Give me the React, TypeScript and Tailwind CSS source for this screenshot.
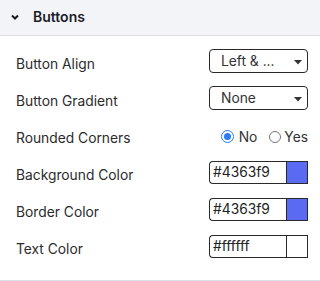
import React from "react";

function Label({ children }: { children: React.ReactNode }) {
  return <div className="mt-[5px] text-[13.8px] text-[#2b2b2b] leading-4">{children}</div>;
}

function Select({ value }: { value: string }) {
  return (
    <div className="relative flex h-[24px] w-[99px] items-center rounded-[4px] border border-[#2a2a2a] bg-white pl-[11px] text-[13.8px] leading-4 text-[#333]">
      {value}
      <svg className="absolute right-[5px] top-[10px]" width="8" height="5" viewBox="0 0 8 5">
        <polygon points="0,0 8,0 4,4.5" fill="#333" />
      </svg>
    </div>
  );
}

function ColorInput({ value, color }: { value: string; color: string }) {
  return (
    <div className="flex h-[23px] w-[99px]">
      <div className="flex flex-1 items-center rounded-l-[4px] border border-r-0 border-[#2a2a2a] pl-[3px] text-[13.8px] leading-4 text-[#222]">
        {value}
      </div>
      <div className="h-full w-[22px] border border-[#2a2a2a]" style={{ backgroundColor: color }} />
    </div>
  );
}

function Row({ label, children }: { label: string; children: React.ReactNode }) {
  return (
    <div className="flex h-[24px] items-center justify-between">
      <Label>{label}</Label>
      {children}
    </div>
  );
}

export default function App() {
  return (
    <div className="w-[320px] bg-white font-['Inter',sans-serif]">
      <div className="flex h-[36px] items-center border-b border-[#dcdfe7] bg-[#f3f4f8] pb-[3px] pl-[11px]">
        <svg width="8" height="6" viewBox="0 0 8 6" className="mt-[2px]">
          <polyline points="1,1.5 4,4.5 7,1.5" fill="none" stroke="#1a1a1a" strokeWidth="2" />
        </svg>
        <span className="ml-[14px] text-[14px] font-semibold text-[#1c1c28]">Buttons</span>
      </div>
      <div className="flex flex-col gap-[13px] border-b border-[#dcdfe7] pb-[22px] pl-[16px] pr-[12px] pt-[13px]">
        <Row label="Button Align">
          <Select value="Left & ..." />
        </Row>
        <Row label="Button Gradient">
          <Select value="None" />
        </Row>
        <Row label="Rounded Corners">
          <div className="mt-[3px] flex items-center text-[13.8px] leading-4 text-[#333]">
            <span className="flex h-[13px] w-[13px] items-center justify-center rounded-full border-[1.5px] border-[#2f7bf5]">
              <span className="h-[7px] w-[7px] rounded-full bg-[#2f7bf5]" />
            </span>
            <span className="ml-[5px]">No</span>
            <span className="ml-[12px] h-[12px] w-[12px] rounded-full border border-[#767676]" />
            <span className="ml-[3px]">Yes</span>
          </div>
        </Row>
        <Row label="Background Color">
          <ColorInput value="#4363f9" color="#5a6af2" />
        </Row>
        <Row label="Border Color">
          <ColorInput value="#4363f9" color="#5a6af2" />
        </Row>
        <Row label="Text Color">
          <ColorInput value="#ffffff" color="#ffffff" />
        </Row>
      </div>
    </div>
  );
}
